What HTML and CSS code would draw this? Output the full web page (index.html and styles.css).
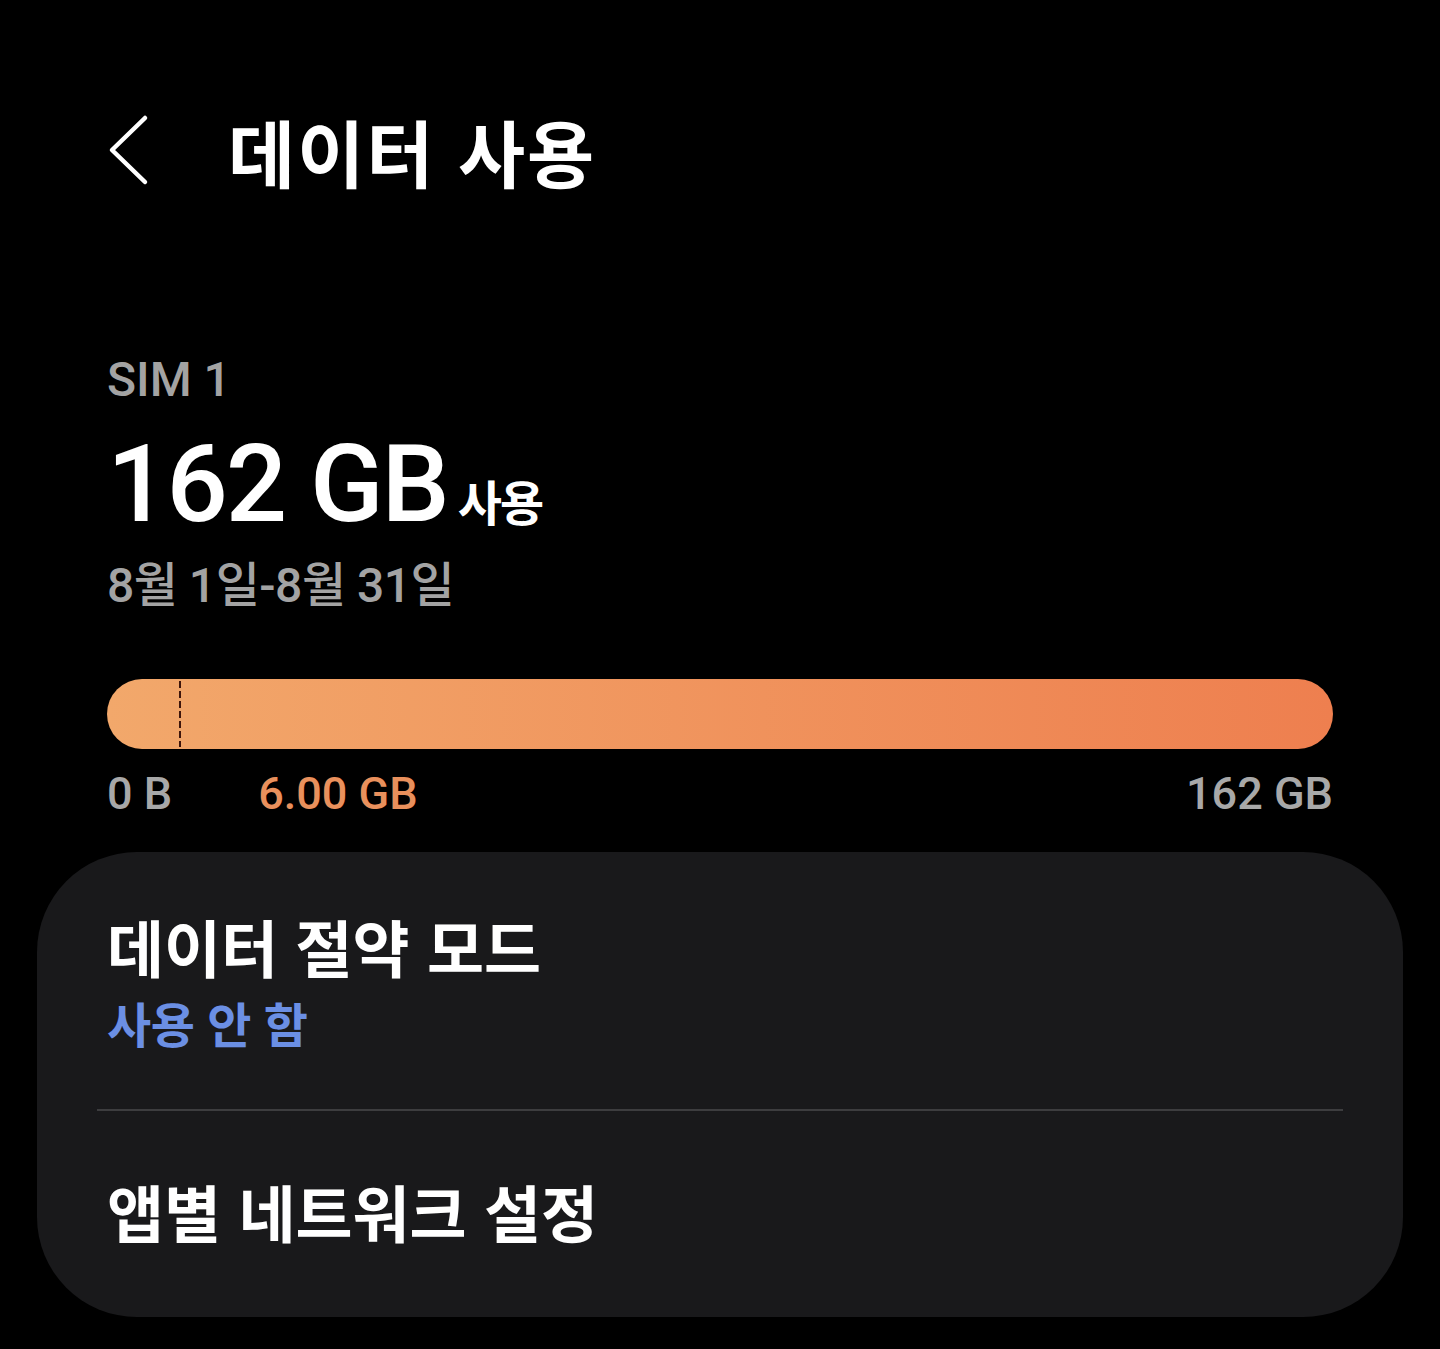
FILE: index.html
```html
<!DOCTYPE html>
<html lang="ko">
<head>
    <meta charset="UTF-8">
    <meta name="viewport" content="width=device-width, initial-scale=1.0">
    <title>데이터 사용</title>
    <link rel="stylesheet" href="styles.css">
</head>
<body>
    <div class="topbar">
        <svg class="back" width="42" height="72" viewBox="0 0 42 72">
            <path d="M37 4 L4 36 L37 68" fill="none" stroke="#ffffff" stroke-width="4.5" stroke-linecap="round" stroke-linejoin="round"/>
        </svg>
        <h1 class="title">데이터 사용</h1>
    </div>

    <div class="summary">
        <p class="sim">SIM 1</p>
        <p class="used">162 GB<span class="used-label">사용</span></p>
        <p class="period">8월 1일-8월 31일</p>

        <div class="bar">
            <!-- 경고 기준선 -->
            <div class="marker"></div>
        </div>
        <div class="scale">
            <span>0 B</span>
            <span class="warn">6.00 GB</span>
            <span class="max">162 GB</span>
        </div>
    </div>

    <div class="card">
        <div class="row first">
            <p class="row-title">데이터 절약 모드</p>
            <p class="row-sub">사용 안 함</p>
        </div>
        <div class="divider"></div>
        <div class="row last">
            <p class="row-title">앱별 네트워크 설정</p>
        </div>
    </div>
</body>
</html>
```

FILE: styles.css
```css
body {
    margin: 0;
    background-color: #000;
    color: #fff;
    font-family: Roboto, "Noto Sans CJK KR", sans-serif;
}
p, h1 {
    margin: 0;
}
.topbar {
    display: flex;
    align-items: center;
    padding-top: 114px;
    height: 72px;
}
.back {
    margin-left: 108px;
    flex-shrink: 0;
}
.title {
    margin-left: 78px;
    font-family: "Noto Sans CJK KR", sans-serif;
    font-size: 73px;
    font-weight: 700;
    letter-spacing: 2px;
    line-height: 80px;
}
.summary {
    padding: 0 107px;
    margin-top: 166px;
}
.sim {
    font-size: 48px;
    font-weight: 500;
    line-height: 56px;
    color: #a3a3a3;
}
.used {
    margin-top: 16px;
    font-size: 108px;
    font-weight: 500;
    line-height: 120px;
    letter-spacing: -2px;
}
.used-label {
    margin-left: 10px;
    font-family: "Noto Sans CJK KR", sans-serif;
    font-size: 48px;
    font-weight: 700;
    letter-spacing: -2px;
    line-height: 48px;
}
.period {
    margin-top: 12px;
    font-size: 48px;
    font-weight: 500;
    line-height: 60px;
    letter-spacing: -0.5px;
    color: #a3a3a3;
}
.bar {
    position: relative;
    margin-top: 63px;
    height: 70px;
    border-radius: 35px;
    background: linear-gradient(to right, #f2a86b, #ee7f4f);
}
.marker {
    position: absolute;
    left: 72px;
    top: 2px;
    bottom: 2px;
    width: 2px;
    background: repeating-linear-gradient(to bottom, #3e150b 0, #3e150b 7px, transparent 7px, transparent 10px);
}
.scale {
    display: flex;
    margin-top: 18px;
    font-size: 45px;
    font-weight: 500;
    line-height: 54px;
    color: #a8a8a8;
}
.warn {
    margin-left: 86px;
    color: #e9905c;
}
.max {
    margin-left: auto;
}
.card {
    margin: 31px 37px 0;
    background-color: #19191b;
    border-radius: 100px;
}
.row {
    padding: 0 70px;
    font-family: "Noto Sans CJK KR", sans-serif;
}
.row.first {
    padding-top: 58px;
    padding-bottom: 59px;
}
.row.last {
    padding-top: 64px;
    padding-bottom: 70px;
}
.row-title {
    font-size: 62px;
    font-weight: 700;
    line-height: 72px;
}
.row-sub {
    margin-top: 12px;
    font-size: 48px;
    font-weight: 700;
    line-height: 56px;
    letter-spacing: -0.5px;
    color: #6b8fe4;
}
.divider {
    height: 2px;
    margin: 0 60px;
    background-color: #3d3d3f;
}
```
